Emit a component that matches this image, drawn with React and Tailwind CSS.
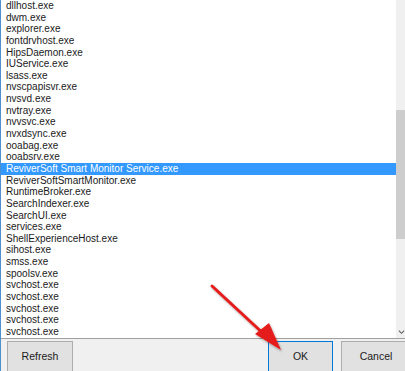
import React from 'react';

const processes = [
  'dllhost.exe',
  'dwm.exe',
  'explorer.exe',
  'fontdrvhost.exe',
  'HipsDaemon.exe',
  'IUService.exe',
  'lsass.exe',
  'nvscpapisvr.exe',
  'nvsvd.exe',
  'nvtray.exe',
  'nvvsvc.exe',
  'nvxdsync.exe',
  'ooabag.exe',
  'ooabsrv.exe',
  'ReviverSoft Smart Monitor Service.exe',
  'ReviverSoftSmartMonitor.exe',
  'RuntimeBroker.exe',
  'SearchIndexer.exe',
  'SearchUI.exe',
  'services.exe',
  'ShellExperienceHost.exe',
  'sihost.exe',
  'smss.exe',
  'spoolsv.exe',
  'svchost.exe',
  'svchost.exe',
  'svchost.exe',
  'svchost.exe',
  'svchost.exe',
];

const selected = 14;

function App() {
  return (
    <div
      className="relative w-[405px] h-[371px] overflow-hidden bg-[#f0f0f0] border-l border-[#4d8fd1] flex flex-col"
      style={{ fontFamily: '"Liberation Sans", Arial, sans-serif' }}
    >
      {/* Process list */}
      <div className="flex h-[339px] bg-white">
        <div className="flex-1 flex flex-col">
          {processes.map((name, i) => (
            <div
              key={i}
              className={
                'h-[11.65px] shrink-0 pl-[5px] text-[10px] leading-[11.65px] whitespace-nowrap ' +
                (i === selected ? 'bg-[#3399ff] text-white' : 'text-[#1a1a1a]')
              }
            >
              {name}
            </div>
          ))}
        </div>
        {/* Scrollbar */}
        <div className="w-[9px] bg-[#f0f0f0] flex flex-col">
          <div className="h-[110px]" />
          <div className="h-[129px] bg-[#cdcdcd]" />
          <div className="flex-1 flex items-end justify-end pb-[3px]">
            <svg width="8" height="6" viewBox="0 0 8 6" className="ml-[2px]">
              <path d="M1 1.5 L4 4.5 L7 1.5" fill="none" stroke="#606060" strokeWidth="1.2" />
            </svg>
          </div>
        </div>
      </div>

      {/* Buttons */}
      <div className="flex-1 border-t border-[#a0a0a0] relative">
        <div className="flex pt-[2px] pl-[6px]">
          <button className="w-[66px] h-[32px] bg-[#e1e1e1] border border-[#adadad] text-[10.5px] text-[#1a1a1a]">
            Refresh
          </button>
          <div className="flex-1" />
          <button className="w-[65px] h-[32px] bg-[#e1e1e1] border border-[#0078d7] text-[10.5px] text-[#1a1a1a]">
            OK
          </button>
          <button className="w-[70px] h-[32px] ml-[8px] mr-[-6px] bg-[#e1e1e1] border border-[#adadad] text-[10.5px] text-[#1a1a1a]">
            Cancel
          </button>
        </div>
      </div>

      {/* Red arrow annotation */}
      <svg className="absolute left-0 top-0 pointer-events-none" width="405" height="371">
        <defs>
          <filter id="sh" x="-20%" y="-20%" width="140%" height="140%">
            <feDropShadow dx="1" dy="1.5" stdDeviation="1.2" floodColor="#000" floodOpacity="0.35" />
          </filter>
        </defs>
        <g filter="url(#sh)">
          <line x1="211" y1="286" x2="266" y2="337" stroke="#e41b1b" strokeWidth="3" strokeLinecap="round" />
          <path d="M280 350 L254 334 L268 323 Z" fill="#e41b1b" />
        </g>
      </svg>
    </div>
  );
}

export default App;
